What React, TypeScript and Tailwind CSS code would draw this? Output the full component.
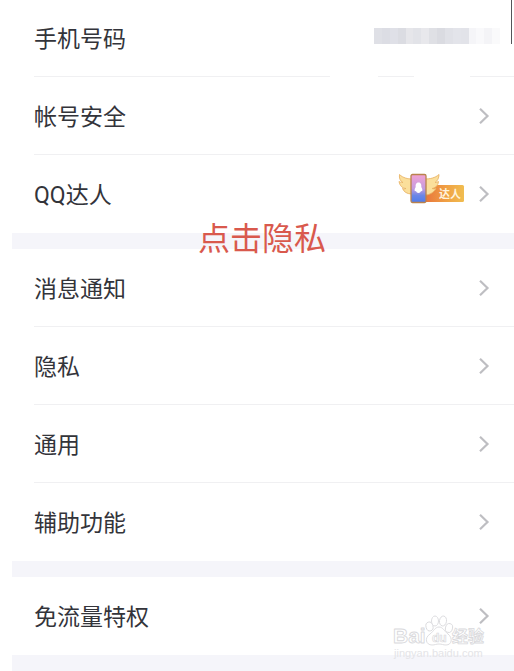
import React from "react";

const FONT = "font-[Roboto,'Noto_Sans_CJK_SC',sans-serif]";

function Chevron() {
  return (
    <svg className="h-5 w-3 shrink-0" viewBox="0 0 12 20" fill="none" stroke="#bebec2" strokeWidth="2.2" aria-hidden="true">
      <path d="M2 2.800 9.500 10 2 17.200" />
    </svg>
  );
}

function TalentBadge() {
  return (
    <svg className="mb-3 h-8 w-17 shrink-0" viewBox="0 0 68 32" role="img" aria-label="达人">
      <defs>
        <linearGradient id="tag" x1="0" x2="1" y1="0" y2="0">
          <stop offset="0" stopColor="#e8733c" />
          <stop offset="0.55" stopColor="#f0a044" />
          <stop offset="1" stopColor="#f0bd50" />
        </linearGradient>
        <linearGradient id="phone" x1="0" x2="0" y1="0" y2="1">
          <stop offset="0" stopColor="#f3a2d4" />
          <stop offset="0.5" stopColor="#c59cdf" />
          <stop offset="0.75" stopColor="#6b86e6" />
          <stop offset="1" stopColor="#4f7ceb" />
        </linearGradient>
      </defs>
      <rect x="26" y="13" width="40" height="17" rx="1.5" fill="url(#tag)" />
      <g fill="#fbdf9b" stroke="#e9b468" strokeWidth="0.9" strokeLinejoin="round">
        <path d="M14 7C10 7 5 6 1.500 2.500 1 6 2 9 5 10.500 3 10.500 2 10 1 9.500 2 14 4 16 8 16.500 6.500 17 5.500 17 4.500 16.500 6 20 9 22 14 22Z" />
        <path d="M27 7C32 7 37 6 41 2.500 41 6 39.500 9 37 10.500 38.500 10.500 39.500 10 40.500 9.500 40 14 37 16 34 16.500 35.500 17 36.500 17 38 16.500 36 20 32 23 27 23Z" />
      </g>
      <rect x="13" y="2.500" width="15" height="28" rx="1.500" fill="url(#phone)" stroke="#b9824d" strokeWidth="1.300" />
      <path d="M20.500 10.500C17.800 10.500 17.500 13 17.700 15 16.500 17 16.300 18.500 17 19.300 17.500 19 18 19 18 19 18.500 21.500 22.500 21.500 23 19 23 19 23.500 19 24 19.300 24.700 18.500 24.500 17 23.300 15 23.500 13 23.200 10.500 20.500 10.500Z" fill="#fff" />
      <text x="41" y="26" fontSize="11" fontWeight="700" fill="#fff3dc" fontFamily="'Noto Sans CJK SC', sans-serif">达人</text>
    </svg>
  );
}

const MOSAIC = [
  "bg-[#dfe0e6]", "bg-[#dcdde4]", "bg-[#dfe0e7]", "bg-[#dbdce2]",
  "bg-[#e6e6ea]", "bg-[#e2e3e8]", "bg-[#e8e8ec]", "bg-[#dfe0e5]",
  "bg-[#dadbe1]", "bg-[#e0e1e7]", "bg-[#e3e4ea]", "bg-[#e2e3e9]",
  "bg-[#f5f5f8]", "bg-[#f9f9fb]", "bg-[#f4f4f7]", "bg-[#fafafb]",
];

function Mosaic() {
  return (
    <span className="mb-1 flex h-4 w-[126px]" aria-hidden="true">
      {MOSAIC.map((shade, i) => (
        <span key={i} className={"h-full flex-1 " + shade} />
      ))}
    </span>
  );
}

function Row({ label, badge, last }: { label: string; badge?: React.ReactNode; last?: boolean }) {
  return (
    <li className="pl-[22px]">
      <button
        type="button"
        className={
          "flex h-[78px] w-full items-center border-b pr-6 text-left " +
          (last ? "border-transparent" : "border-[#f0f0f2]")
        }
      >
        <span className="flex-1 pt-1">{label}</span>
        {badge}
        <span className="ml-3 flex"><Chevron /></span>
      </button>
    </li>
  );
}

function Band() {
  return <div className="h-4 bg-[#f5f5fa]" />;
}

function Watermark() {
  return (
    <svg className="pointer-events-none absolute right-7 bottom-2 h-12 w-24" viewBox="0 0 96 48" role="img" aria-label="Baidu 经验">
      <g fill="#fff" stroke="#d9d9dc" strokeWidth="0.900" strokeLinejoin="round">
        <text x="3" y="28" fontSize="21" fontWeight="700" fontFamily="'Liberation Sans', sans-serif">Bai</text>
        <ellipse cx="39.500" cy="11.500" rx="3.500" ry="4.500" transform="rotate(-15 39.500 11.500)" />
        <ellipse cx="45" cy="6" rx="3.500" ry="5" />
        <ellipse cx="53" cy="6" rx="3.500" ry="5" transform="rotate(8 53 6)" />
        <ellipse cx="59" cy="13" rx="3.500" ry="4.500" transform="rotate(15 59 13)" />
        <path d="M49 12C45 12 44 16 40 19 34 23 36 30 42 30 45 30 46 29 49 29 52 29 53 30 56 30 62 30 63 23 58 19 54 16 53 12 49 12Z" />
        <text x="42" y="27" fontSize="12" strokeWidth="0.700" fontWeight="700" fontFamily="'Liberation Sans', sans-serif">du</text>
        <text x="62" y="27" fontSize="16" strokeWidth="0.800" fontWeight="700" fontFamily="'Noto Sans CJK SC', sans-serif">经验</text>
      </g>
      <text x="4" y="42" fontSize="11" fill="#e4e4e7" fontFamily="'Liberation Sans', sans-serif">jingyan.baidu.com</text>
    </svg>
  );
}

export default function App() {
  return (
    <main className={"relative bg-white pl-3 text-[23px] leading-8 text-[#33343a] " + FONT}>
      <ul>
        <li className="relative pl-[22px]">
          <div className="flex h-19 items-center pr-3.5">
            <span className="flex-1 pt-1">手机号码</span>
            <Mosaic />
          </div>
          <div className="flex h-px" aria-hidden="true">
            <span className="flex-1 bg-[#f0f0f2]" />
            <span className="w-12" />
            <span className="w-9 bg-[#f0f0f2]" />
            <span className="w-14" />
            <span className="w-11 bg-[#f0f0f2]" />
          </div>
          <span className="absolute top-0 right-0.5 h-11 w-px bg-[#55555a]" aria-hidden="true" />
        </li>
        <Row label="帐号安全" />
        <Row label="QQ达人" badge={<TalentBadge />} last />
      </ul>
      <div className="relative">
        <Band />
        <p className="absolute inset-x-0 -top-3 pr-0.5 text-center text-[32px] leading-9 text-[#d9594d]">点击隐私</p>
      </div>
      <ul>
        <Row label="消息通知" />
        <Row label="隐私" />
        <Row label="通用" />
        <Row label="辅助功能" last />
      </ul>
      <Band />
      <ul>
        <Row label="免流量特权" last />
      </ul>
      <Band />
      <Watermark />
    </main>
  );
}
